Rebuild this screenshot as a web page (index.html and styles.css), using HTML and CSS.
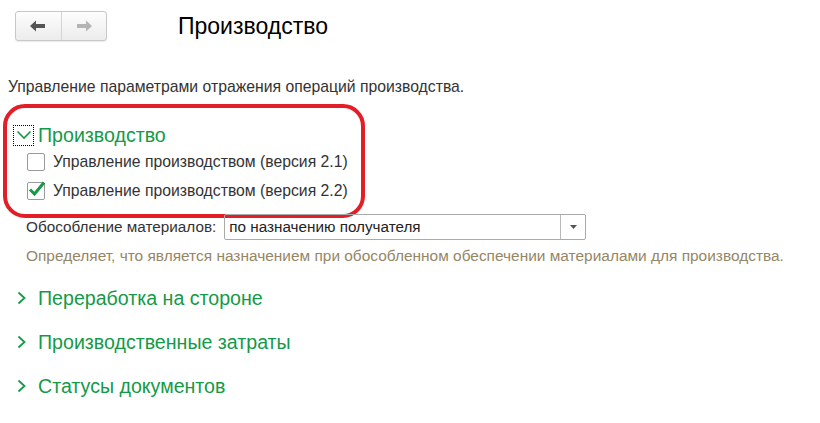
FILE: index.html
```html
<!DOCTYPE html>
<html>

<head>
    <meta charset="UTF-8">
    <title>Производство</title>
    <link rel="stylesheet" href="styles.css">
</head>

<body>
    <div id="header">
        <div class="nav">
            <span class="nav_btn"><svg width="16" height="12" viewBox="0 0 16 12"><path d="M0 6 L6 0.5 L6 4 L15 4 L15 8 L6 8 L6 11.5 Z" fill="#555"/></svg></span>
            <span class="nav_btn"><svg width="16" height="12" viewBox="0 0 16 12"><path d="M16 6 L10 0.5 L10 4 L1 4 L1 8 L10 8 L10 11.5 Z" fill="#b4b4b4"/></svg></span>
        </div>
        <h1 id="title">Производство</h1>
    </div>

    <p class="intro">Управление параметрами отражения операций производства.</p>

    <div class="highlight">
        <div class="group_title open">
            <span class="toggle"><svg width="16" height="10" viewBox="0 0 16 10"><path d="M1.5 1.5 L8 8 L14.5 1.5" fill="none" stroke="#149a47" stroke-width="1.6"/></svg></span>
            Производство
        </div>
        <label class="check"><span class="box"></span>Управление производством (версия 2.1)</label>
        <label class="check"><span class="box"><svg width="18" height="16" viewBox="0 0 18 16"><path d="M2 8.5 L6.5 13 L16 1.5" fill="none" stroke="#169a48" stroke-width="3"/></svg></span>Управление производством (версия 2.2)</label>
    </div>

    <div class="field">
        <span class="field_label">Обособление материалов:</span>
        <div class="select">
            <span class="select_value">по назначению получателя</span>
            <span class="select_btn"><svg width="7" height="4" viewBox="0 0 7 4"><path d="M0 0 L7 0 L3.5 4 Z" fill="#555"/></svg></span>
        </div>
    </div>
    <p class="hint">Определяет, что является назначением при обособленном обеспечении материалами для производства.</p>

    <div class="group_title closed">
        <span class="chevron"><svg width="10" height="14" viewBox="0 0 10 14"><path d="M1.5 1.5 L7.5 7 L1.5 12.5" fill="none" stroke="#149a47" stroke-width="1.8"/></svg></span>
        Переработка на стороне
    </div>
    <div class="group_title closed">
        <span class="chevron"><svg width="10" height="14" viewBox="0 0 10 14"><path d="M1.5 1.5 L7.5 7 L1.5 12.5" fill="none" stroke="#149a47" stroke-width="1.8"/></svg></span>
        Производственные затраты
    </div>
    <div class="group_title closed">
        <span class="chevron"><svg width="10" height="14" viewBox="0 0 10 14"><path d="M1.5 1.5 L7.5 7 L1.5 12.5" fill="none" stroke="#149a47" stroke-width="1.8"/></svg></span>
        Статусы документов
    </div>
</body>

</html>
```

FILE: styles.css
```css
* {
    margin: 0;
    padding: 0;
    box-sizing: border-box;
}

html,
body {
    width: 100%;
    background: white;
}

body {
    font-family: "Liberation Sans", Arial, sans-serif;
    font-size: 15px;
    color: #333;
}

#header {
    display: flex;
    align-items: center;
    padding: 11px 0 0 15px;
    height: 41px;
}

.nav {
    display: flex;
    width: 92px;
    height: 30px;
    border: 1px solid #c8c8c8;
    border-radius: 3px;
    background: linear-gradient(#fdfdfd, #ececec);
    box-shadow: 0 1px 1px rgba(0, 0, 0, 0.08);
}

.nav_btn {
    flex: 1;
    display: flex;
    align-items: center;
    justify-content: center;
}

.nav_btn + .nav_btn {
    border-left: 1px solid #d4d4d4;
}

#title {
    margin-left: 71px;
    font-size: 23px;
    font-weight: normal;
    color: #000;
}

.intro {
    margin: 37px 0 0 8px;
    font-size: 15.75px;
    line-height: 18px;
}

.highlight {
    width: 362px;
    height: 114px;
    margin: 8px 0 0 3px;
    padding: 16px 0 0 6px;
    border: 4px solid #e41e26;
    border-radius: 22px;
}

.group_title {
    display: flex;
    align-items: center;
    font-size: 19.6px;
    color: #149a47;
    height: 22px;
}

.toggle {
    display: flex;
    align-items: center;
    justify-content: center;
    width: 21px;
    height: 21px;
    margin-right: 4px;
    border: 1px dotted #000;
}

.check {
    display: flex;
    align-items: center;
    margin: 2px 0 0 14px;
    height: 27px;
    font-size: 15.75px;
}

.box {
    display: flex;
    align-items: center;
    justify-content: center;
    width: 18px;
    height: 18px;
    margin-right: 8px;
    border: 1px solid #9a9a9a;
    border-radius: 2px;
    background: white;
}

.box svg {
    margin: -4px -2px 0 0;
}

.field {
    display: flex;
    align-items: center;
    margin: -4px 0 0 26px;
}

.field_label {
    margin-right: 8px;
    font-size: 15.3px;
}

.select {
    display: flex;
    width: 362px;
    height: 26px;
    border: 1px solid #aaa;
    border-radius: 2px;
}

.select_value {
    flex: 1;
    padding: 0 4px;
    line-height: 24px;
    font-size: 15.25px;
    color: #222;
}

.select_btn {
    width: 25px;
    display: flex;
    align-items: center;
    justify-content: center;
    border-left: 1px solid #b8b8b8;
}

.hint {
    margin: 7px 0 0 26px;
    font-size: 15.45px;
    color: #958665;
    line-height: 18px;
}

.group_title.closed {
    margin: 22px 0 0 17px;
}

.group_title.closed + .group_title.closed {
    margin-top: 22px;
}

.chevron {
    display: flex;
    width: 21px;
}
```
